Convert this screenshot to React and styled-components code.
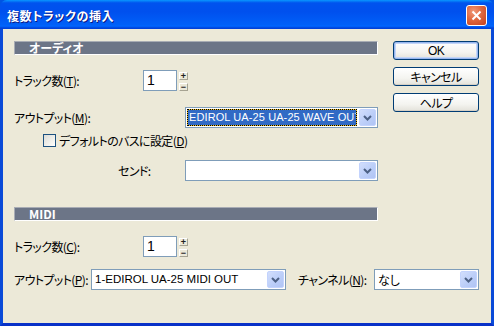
import React from "react";
import styled, { createGlobalStyle } from "styled-components";

const JP = `"Noto Sans CJK JP", "Liberation Sans", sans-serif`;
const UI = `"Liberation Sans", "Noto Sans CJK JP", sans-serif`;

const Global = createGlobalStyle`
  html, body { margin: 0; padding: 0; background: #ECE9D8; }
  body { width: 494px; height: 326px; overflow: hidden; }
`;

const Win = styled.div`
  width: 494px;
  height: 326px;
  display: flex;
  flex-direction: column;
  background: #0054E3;
  font-family: ${JP};
  font-size: 12px;
  letter-spacing: -0.6px;
  font-feature-settings: "palt";
  color: #000;
`;

const TitleBar = styled.div`
  height: 29px;
  flex: none;
  display: flex;
  align-items: center;
  justify-content: space-between;
  padding: 0 7px 0 7px;
  box-sizing: border-box;
  border-radius: 7px 7px 0 0;
  background: linear-gradient(#0997FF 0%, #0053EE 10%, #0050EE 40%, #0060F8 85%, #0066FF 90%, #0047DD 96%, #003DD7 100%);
`;

const Title = styled.div`
  color: #fff;
  font-weight: bold;
  font-size: 12px;
  letter-spacing: 0.6px;
  text-shadow: 1px 1px 0 #0A1883;
  padding-top: 1px;
`;

const CloseBtn = styled.div`
  width: 21px;
  height: 21px;
  box-sizing: border-box;
  border: 1px solid #fff;
  border-radius: 3px;
  background: radial-gradient(circle at 35% 30%, #F09A7A 0%, #E06840 45%, #C4401C 100%);
  display: flex;
  align-items: center;
  justify-content: center;
  margin-top: 1px;
`;

const Body = styled.div`
  flex: 1;
  background: #ECE9D8;
  border-left: 3px solid #0A4AD8;
  border-right: 3px solid #0A4AD8;
  border-bottom: 3px solid #0831C8;
  padding: 12px 12px 0 11px;
  display: flex;
  flex-direction: column;
`;

const Top = styled.div`
  display: flex;
  gap: 15px;
`;

const Left = styled.div`
  width: 364px;
  display: flex;
  flex-direction: column;
`;

const SectionHeader = styled.div`
  height: 14px;
  box-sizing: border-box;
  background: #6C7587;
  border-top: 1px solid #A8ACB4;
  border-left: 1px solid #A8ACB4;
  border-right: 1px solid #fff;
  border-bottom: 1px solid #fff;
  color: #fff;
  font-weight: bold;
  font-size: 12px;
  letter-spacing: 0;
  line-height: 12px;
  padding-left: 14px;
  margin-top: ${(p) => p.$mt || 0}px;
`;

const Row = styled.div`
  display: flex;
  align-items: center;
  height: ${(p) => p.$h || 21}px;
  margin-top: ${(p) => p.$mt || 0}px;
  padding-left: ${(p) => p.$indent || 0}px;
`;

const Label = styled.span`
  width: ${(p) => p.$w}px;
  margin-left: ${(p) => p.$ml || 0}px;
  flex: none;
  white-space: nowrap;
`;

const SpinBox = styled.div`
  width: 34px;
  height: 21px;
  box-sizing: border-box;
  border: 1px solid #7F9DB9;
  background: #fff;
  font-family: ${UI};
  font-size: 14px;
  letter-spacing: 0;
  line-height: 19px;
  padding-left: 3px;
`;

const SpinCol = styled.div`
  display: flex;
  flex-direction: column;
  gap: 3px;
  margin-left: 2px;
  padding-top: 1px;
`;

const SpinBtn = styled.div`
  width: 9px;
  height: 8px;
  box-sizing: border-box;
  border-top: 1px solid #fff;
  border-left: 1px solid #fff;
  border-right: 1px solid #A6A392;
  border-bottom: 1px solid #A6A392;
  background: #ECE9D8;
  font-family: ${UI};
  font-size: 9px;
  font-weight: bold;
  letter-spacing: 0;
  line-height: 6px;
  text-align: center;
  color: #222;
`;

const Combo = styled.div`
  width: ${(p) => p.$w}px;
  height: 21px;
  box-sizing: border-box;
  border: 1px solid #7F9DB9;
  background: #fff;
  display: flex;
  align-items: center;
  padding: 1px;
  flex: none;
`;

const ComboValue = styled.div`
  flex: 1;
  overflow: hidden;
  white-space: nowrap;
  font-family: ${(p) => (p.$jp ? JP : UI)};
  font-size: ${(p) => (p.$jp ? 12 : 11.5)}px;
  letter-spacing: 0;
  padding-left: 2px;
  height: 17px;
  line-height: 17px;
`;

const Focus = styled.div`
  flex: 1;
  margin-right: 2px;
  height: 17px;
  box-sizing: border-box;
  border: 1px dotted #000;
  background-color: #F0C020;
  overflow: hidden;
`;

const Selected = styled.div`
  background: #316AC5;
  color: #fff;
  height: 15px;
  line-height: 15px;
  font-family: ${UI};
  font-size: 11px;
  letter-spacing: 0.1px;
  white-space: nowrap;
  padding-left: 1px;
`;

const DropBtn = styled.div`
  width: 17px;
  height: 17px;
  flex: none;
  box-sizing: border-box;
  border: 1px solid #C3D3FD;
  border-radius: 2px;
  background: linear-gradient(135deg, #D2DEFC 0%, #BACDF8 60%, #B0C4F4 100%);
  display: flex;
  align-items: center;
  justify-content: center;
`;

const CheckRow = styled.label`
  display: flex;
  align-items: center;
  gap: 3px;
  white-space: nowrap;
`;

const CheckBox = styled.span`
  width: 13px;
  height: 13px;
  flex: none;
  box-sizing: border-box;
  border: 1px solid #1C5180;
  background: linear-gradient(135deg, #DCDCD7 0%, #F4F4F0 70%, #fff 100%);
`;

const Buttons = styled.div`
  width: 86px;
  display: flex;
  flex-direction: column;
  gap: 7px;
`;

const Btn = styled.div`
  height: 19px;
  box-sizing: border-box;
  border: 1px solid #003C74;
  border-radius: 3px;
  background: linear-gradient(#FFFFFF 0%, #F4F4F0 60%, #E3E2DA 100%);
  box-shadow: ${(p) => (p.$default ? "inset 0 0 0 1px #97B6EE, inset 0 0 0 2px #C2D5F7" : "inset 0 -1px 0 #D6D0C5")};
  display: flex;
  align-items: center;
  justify-content: center;
  font-family: ${(p) => (p.$latin ? UI : JP)};
  font-size: 12px;
`;

const Chevron = () => (
  <svg width="9" height="6" viewBox="0 0 9 6">
    <path d="M1 1 L4.5 4.5 L8 1" fill="none" stroke="#4D6185" strokeWidth="2" />
  </svg>
);

const CloseX = () => (
  <svg width="11" height="11" viewBox="0 0 11 11">
    <path d="M1.5 1.5 L9.5 9.5 M9.5 1.5 L1.5 9.5" stroke="#fff" strokeWidth="2" />
  </svg>
);

const Spin = () => (
  <>
    <SpinBox>1</SpinBox>
    <SpinCol>
      <SpinBtn>+</SpinBtn>
      <SpinBtn>−</SpinBtn>
    </SpinCol>
  </>
);

export default function App() {
  return (
    <Win>
      <Global />
      <TitleBar>
        <Title>複数トラックの挿入</Title>
        <CloseBtn>
          <CloseX />
        </CloseBtn>
      </TitleBar>
      <Body>
        <Top>
          <Left>
            <SectionHeader>オーディオ</SectionHeader>
            <Row $mt={15}>
              <Label $w={129}>
                トラック数(<u>T</u>):
              </Label>
              <Spin />
            </Row>
            <Row $mt={16}>
              <Label $w={171}>
                アウトプット(<u>M</u>):
              </Label>
              <Combo $w={193}>
                <Focus>
                  <Selected>EDIROL UA-25 UA-25 WAVE OUT</Selected>
                </Focus>
                <DropBtn>
                  <Chevron />
                </DropBtn>
              </Combo>
            </Row>
            <Row $h={14} $mt={5} $indent={29}>
              <CheckRow>
                <CheckBox />
                <span>
                  デフォルトのバスに設定(<u>D</u>)
                </span>
              </CheckRow>
            </Row>
            <Row $mt={13} $indent={104}>
              <Label $w={67}>センド:</Label>
              <Combo $w={193}>
                <ComboValue />
                <DropBtn>
                  <Chevron />
                </DropBtn>
              </Combo>
            </Row>
            <SectionHeader $mt={26}>MIDI</SectionHeader>
            <Row $mt={15}>
              <Label $w={129}>
                トラック数(<u>C</u>):
              </Label>
              <Spin />
            </Row>
          </Left>
          <Buttons>
            <Btn $default $latin>OK</Btn>
            <Btn>キャンセル</Btn>
            <Btn>ヘルプ</Btn>
          </Buttons>
        </Top>
        <Row $mt={12}>
          <Label $w={77}>
            アウトプット(<u>P</u>):
          </Label>
          <Combo $w={195}>
            <ComboValue>1-EDIROL UA-25 MIDI OUT</ComboValue>
            <DropBtn>
              <Chevron />
            </DropBtn>
          </Combo>
          <Label $w={76} $ml={12}>
            チャンネル(<u>N</u>):
          </Label>
          <Combo $w={105}>
            <ComboValue $jp>なし</ComboValue>
            <DropBtn>
              <Chevron />
            </DropBtn>
          </Combo>
        </Row>
      </Body>
    </Win>
  );
}
